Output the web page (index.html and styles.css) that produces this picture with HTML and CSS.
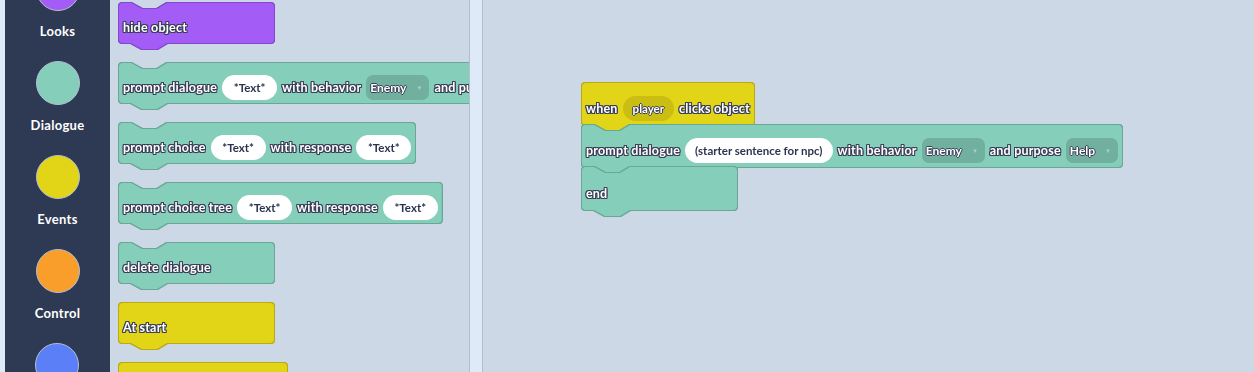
FILE: index.html
```html
<!DOCTYPE html>
<html lang="en">
<head>
    <meta charset="UTF-8">
    <meta name="viewport" content="width=device-width, initial-scale=1.0">
    <title>Block Editor</title>
    <link rel="stylesheet" href="styles.css">
</head>
<body>
    <div class="edge"></div>
    <nav class="sidebar">
        <div class="category">
            <span class="dot purple"></span>
            <span class="cat-label">Looks</span>
        </div>
        <div class="category">
            <span class="dot teal"></span>
            <span class="cat-label">Dialogue</span>
        </div>
        <div class="category">
            <span class="dot yellow"></span>
            <span class="cat-label">Events</span>
        </div>
        <div class="category">
            <span class="dot orange"></span>
            <span class="cat-label">Control</span>
        </div>
        <div class="category">
            <span class="dot blue"></span>
            <span class="cat-label">Variables</span>
        </div>
    </nav>

    <!-- Toolbox flyout -->
    <div class="flyout">
        <div class="block looks wide"><span class="label">hide object</span></div>
        <div class="block dialogue">
            <span class="label">prompt dialogue</span>
            <span class="field">*Text*</span>
            <span class="label">with behavior</span>
            <span class="dropdown">Enemy <span class="caret">&#9660;</span></span>
            <span class="label">and purpose</span>
            <span class="dropdown">Help <span class="caret">&#9660;</span></span>
        </div>
        <div class="block dialogue">
            <span class="label">prompt choice</span>
            <span class="field">*Text*</span>
            <span class="label">with response</span>
            <span class="field">*Text*</span>
        </div>
        <div class="block dialogue">
            <span class="label">prompt choice tree</span>
            <span class="field">*Text*</span>
            <span class="label">with response</span>
            <span class="field">*Text*</span>
        </div>
        <div class="block dialogue wide"><span class="label">delete dialogue</span></div>
        <div class="block events hat wide"><span class="label">At start</span></div>
        <div class="block events hat wider"></div>
    </div>

    <div class="scrollbar"></div>

    <!-- Workspace -->
    <div class="workspace">
        <div class="stack">
            <div class="block events hat">
                <span class="label">when</span>
                <span class="pill">player</span>
                <span class="label">clicks object</span>
            </div>
            <div class="block dialogue">
                <span class="label">prompt dialogue</span>
                <span class="field">(starter sentence for npc)</span>
                <span class="label">with behavior</span>
                <span class="dropdown">Enemy <span class="caret">&#9660;</span></span>
                <span class="label">and purpose</span>
                <span class="dropdown">Help <span class="caret">&#9660;</span></span>
            </div>
            <div class="block dialogue wide end"><span class="label">end</span></div>
        </div>
    </div>
</body>
</html>
```

FILE: styles.css
```css
body, html {
    margin: 0;
    padding: 0;
    width: 100%;
    height: 100%;
    overflow: hidden;
}
body {
    display: flex;
    background: #cdd8e7;
    font-family: Lato, "Noto Sans", sans-serif;
}
.edge {
    width: 5px;
    flex-shrink: 0;
    background: #dfeaf9;
}
/* Category sidebar */
.sidebar {
    width: 105px;
    flex-shrink: 0;
    background: #2e3953;
    display: flex;
    flex-direction: column;
    align-items: center;
}
.category {
    display: flex;
    flex-direction: column;
    align-items: center;
    height: 94px;
    flex-shrink: 0;
}
.category:first-child {
    margin-top: -33px;
}
.dot {
    width: 42px;
    height: 42px;
    border-radius: 50%;
    border: 1px solid #b3bfd4;
}
.dot.purple { background: #a45cf6; }
.dot.teal { background: #85cfba; }
.dot.yellow { background: #e2d416; }
.dot.orange { background: #f99e2a; }
.dot.blue { background: #5b7ff6; }
.cat-label {
    margin-top: 12px;
    color: white;
    font-weight: bold;
    font-size: 13px;
    line-height: 16px;
    letter-spacing: 0.3px;
}
/* Flyout */
.flyout {
    width: 359px;
    flex-shrink: 0;
    overflow: hidden;
    display: flex;
    flex-direction: column;
    align-items: flex-start;
    gap: 20px;
    padding: 3px 0 0 9px;
    box-sizing: border-box;
}
.scrollbar {
    width: 12px;
    flex-shrink: 0;
    background: #dfeaf9;
    border-left: 1px solid #b6bdc8;
    border-right: 1px solid #b6bdc8;
}
.workspace {
    flex: 1;
    position: relative;
}
.stack {
    position: absolute;
    left: 99px;
    top: 83px;
    display: flex;
    flex-direction: column;
    align-items: flex-start;
}
.stack .block {
    height: 42px;
}
/* Blocks */
.block {
    --fill: #85cfba;
    --edge: #6aa797;
    position: relative;
    flex-shrink: 0;
    display: flex;
    align-items: center;
    gap: 5px;
    height: 40px;
    box-sizing: border-box;
    padding: 8px 4px 0 4px;
    white-space: nowrap;
    filter: drop-shadow(1px 0 0 var(--edge)) drop-shadow(-1px 0 0 var(--edge)) drop-shadow(0 1px 0 var(--edge)) drop-shadow(0 -1px 0 var(--edge));
}
.block::before {
    content: '';
    position: absolute;
    inset: 0;
    border-radius: 4px;
    background: var(--fill);
    clip-path: polygon(0 0, 12px 0, 23px 6px, 38px 6px, 48px 0, 100% 0, 100% 100%, 0 100%);
    z-index: -1;
}
.block::after {
    content: '';
    position: absolute;
    left: 12px;
    top: 100%;
    width: 36px;
    height: 6px;
    background: var(--fill);
    clip-path: polygon(0 0, 100% 0, 26px 100%, 11px 100%);
    z-index: -1;
}
.block.hat::before {
    clip-path: none;
}
.block.looks { --fill: #a45cf6; --edge: #8548cc; }
.block.events { --fill: #e2d416; --edge: #b8ab16; }
.block.wide { width: 155px; }
.block.wider { width: 168px; }
.stack .block.end { height: 43px; padding-top: 10px; }

.label {
    color: white;
    font-weight: bold;
    font-size: 12.5px;
    letter-spacing: 0.2px;
    text-shadow: 1px 0 #3a3f58, -1px 0 #3a3f58, 0 1px #3a3f58, 0 -1px #3a3f58,
        1px 1px #3a3f58, -1px -1px #3a3f58, 1px -1px #3a3f58, -1px 1px #3a3f58;
}
.field {
    background: white;
    color: #2c3550;
    font-weight: bold;
    font-size: 11.5px;
    height: 25px;
    line-height: 25px;
    border-radius: 13px;
    padding: 0 10px;
    min-width: 35px;
    text-align: center;
}
.dropdown {
    display: flex;
    align-items: center;
    gap: 10px;
    height: 25px;
    border-radius: 7px;
    padding: 0 7px 0 4px;
    background: rgba(0, 0, 0, 0.15);
    color: white;
    font-weight: bold;
    font-size: 12px;
    text-shadow: 1px 0 #3a3f58, -1px 0 #3a3f58, 0 1px #3a3f58, 0 -1px #3a3f58;
}
.caret {
    font-size: 6px;
    color: #a9cfc3;
    text-shadow: none;
}
.pill {
    height: 25px;
    line-height: 25px;
    border-radius: 13px;
    padding: 0 10px;
    background: rgba(0, 0, 0, 0.1);
    color: white;
    font-weight: bold;
    font-size: 11.5px;
    text-shadow: 1px 0 #3a3f58, -1px 0 #3a3f58, 0 1px #3a3f58, 0 -1px #3a3f58;
}
```
